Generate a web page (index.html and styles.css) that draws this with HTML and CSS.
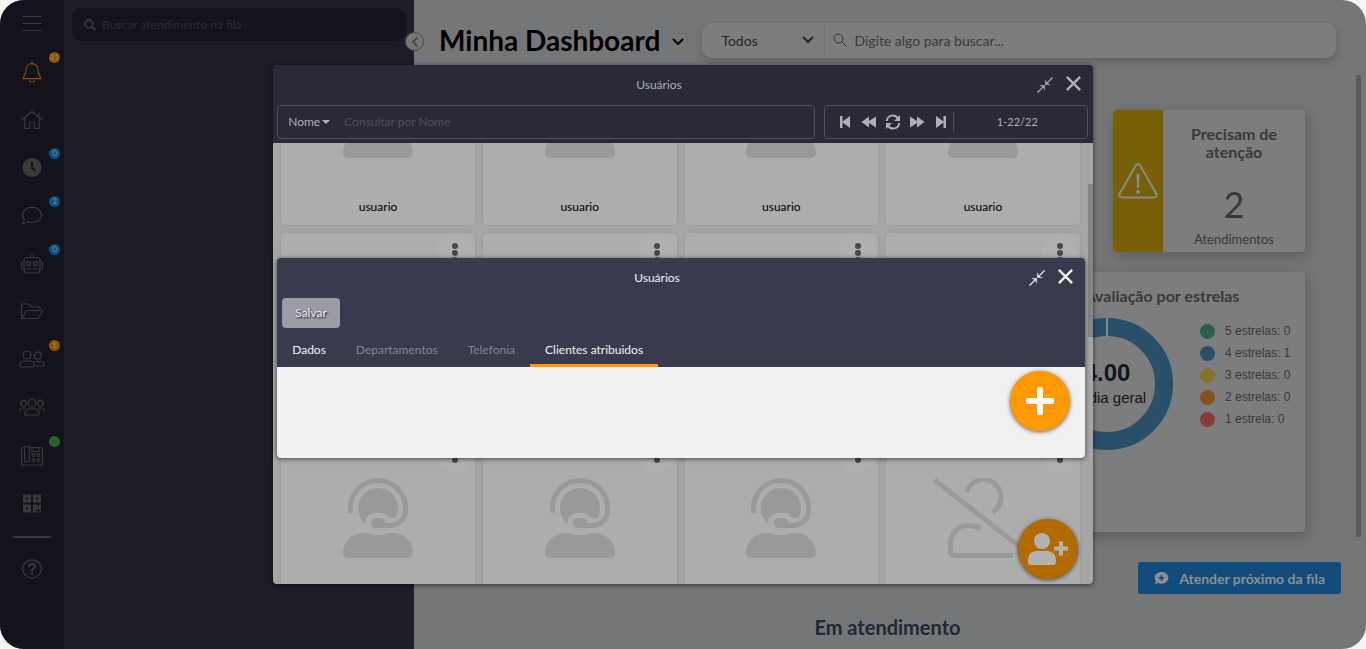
FILE: index.html
```html
<!DOCTYPE html>
<html lang="pt-BR">
<head>
<meta charset="utf-8">
<title>Minha Dashboard</title>
<meta name="viewport" content="width=device-width, initial-scale=1">
<link rel="stylesheet" href="styles.css">
</head>
<body>
<svg class="defs" aria-hidden="true">
  <symbol id="headset" viewBox="0 0 70 80">
    <circle cx="35" cy="30" r="20" fill="currentColor"/>
    <path class="cut" d="M32 35h6a9 9 0 0 1 8 5h12v15H32a10 10 0 0 1 0-20z"/>
    <path d="M7.500 32.500V30a27.500 27.500 0 0 1 55 0v2.500a15 15 0 0 1-15 15H36" fill="none" stroke="currentColor" stroke-width="5" stroke-linecap="round"/>
    <rect x="27.700" y="40" width="14.600" height="10" rx="5" fill="currentColor"/>
    <path d="M20 55h4q11 4.500 22 0h4a20 20 0 0 1 20 20a5 5 0 0 1-5 5H5a5 5 0 0 1-5-5a20 20 0 0 1 20-20z" fill="currentColor"/>
  </symbol>
  <symbol id="user-off" viewBox="0 0 100 80">
    <path d="M1.500 2l97 76M33.500 14.500A17.500 17.500 0 1 1 59.500 34M48 50.500C44 48.500 40 47.500 35 47.500C25 47.500 17.500 56 17.500 65v8.500q0 4 4 4H80" fill="none" stroke="currentColor" stroke-width="5"/>
  </symbol>
  <symbol id="search" viewBox="0 0 512 512"><path fill="currentColor" d="M505 442.700L405.300 343c-4.500-4.500-10.600-7-17-7H372c27.600-35.300 44-79.700 44-128C416 93.100 322.900 0 208 0S0 93.100 0 208s93.100 208 208 208c48.300 0 92.700-16.400 128-44v16.300c0 6.400 2.500 12.500 7 17l99.700 99.700c9.400 9.400 24.600 9.400 33.900 0l28.300-28.300c9.400-9.400 9.400-24.600.1-34zM208 336c-70.700 0-128-57.200-128-128 0-70.700 57.200-128 128-128 70.700 0 128 57.200 128 128 0 70.700-57.200 128-128 128z"/></symbol>
  <symbol id="shrink" viewBox="0 0 16 16"><path d="M.5 15.500L7.300 8.700M15.500.5L8.700 7.300" fill="none" stroke="currentColor" stroke-width="1.200"/><path d="M7.600 8.400v4.800L6.300 9.700 2.800 8.400zM8.400 7.600V2.800l1.300 3.500L13.200 7.600z" fill="currentColor" stroke="currentColor" stroke-width=".4"/></symbol>
  <symbol id="close" viewBox="0 0 14 14"><path d="M.8.8l12.400 12.400M13.200.8L.8 13.200" stroke="currentColor" stroke-width="2.200"/></symbol>
  <symbol id="kebab" viewBox="0 0 6 20"><g fill="currentColor"><circle cx="3" cy="3" r="3"/><circle cx="3" cy="10" r="3"/><circle cx="3" cy="17" r="3"/></g></symbol>
  <symbol id="chevron" viewBox="0 0 12 8"><path d="M1.500 1.500L6 6l4.500-4.500" fill="none" stroke="currentColor" stroke-width="2" stroke-linecap="round"/></symbol>
</svg>

<div class="app">
  <nav class="rail" aria-label="Principal">
    <button class="rail-item" aria-label="Menu"><svg viewBox="0 0 24 24"><path d="M3 4.500h18M3 11.500h18M3 18.500h18"/></svg></button>
    <button class="rail-item alert" aria-label="Notificações"><svg viewBox="0 0 24 24"><path d="M12 2v2M12 3.700c-3.800 0-6 2.800-6 6.300 0 4.500-1.300 5.500-2.500 7-.6.800-.2 1.700.7 1.700h15.600c.9 0 1.300-.9.700-1.700C19.300 15.500 18 14.500 18 10c0-3.500-2.200-6.300-6-6.300zM9.700 20.500a2.300 1.500 0 0 0 4.600 0"/></svg><span class="badge orange">31</span></button>
    <button class="rail-item" aria-label="Início"><svg viewBox="0 0 24 24"><path d="M2.500 11.500L12 3.500l9.500 8M4.800 9.800v10.700h4.700v-6h5v6h4.700V9.800M18.800 9V5"/></svg></button>
    <button class="rail-item" aria-label="Histórico"><svg viewBox="0 0 24 24"><circle class="solid" cx="12" cy="11.500" r="9.500"/><path class="clock-hand" d="M12 6.500V12l3 2.300"/></svg><span class="badge blue">0</span></button>
    <button class="rail-item" aria-label="Conversas"><svg viewBox="0 0 24 24"><path d="M12 3.300c5.300 0 9.500 3.400 9.500 7.600s-4.200 7.600-9.500 7.600c-1.600 0-3.200-.3-4.500-.9-1.500 1.200-3.400 2-5.200 2 1.200-1 2-2.500 2.100-3.900-1.200-1.300-1.900-3-1.900-4.800 0-4.200 4.200-7.600 9.500-7.600z"/></svg><span class="badge blue">2</span></button>
    <button class="rail-item" aria-label="Robôs"><svg viewBox="0 0 24 24"><rect x="4" y="5.500" width="16" height="15.500" rx="3"/><path d="M12 2v3.500M4 10H1.500v7H4M20 10h2.500v7H20M7 17h2M11 17h2M15 17h2"/><circle cx="8.400" cy="11.500" r="1.900"/><circle cx="15.600" cy="11.500" r="1.900"/></svg><span class="badge blue">0</span></button>
    <button class="rail-item" aria-label="Arquivos"><svg viewBox="0 0 24 24"><path d="M1.500 18.500V5q0-1 1-1h6l3 3h7.500q1 0 1 1v2.500M1.800 18.500l4-7q.5-1 1.500-1h14.500q1 0 .5 1l-3.500 6q-.5 1-1.500 1z"/></svg></button>
    <button class="rail-item" aria-label="Usuários"><svg viewBox="0 0 26 24"><circle cx="8" cy="7" r="4"/><circle cx="19" cy="7.700" r="3.500"/><path d="M1 19v-2q0-4 4-4h6q4 0 4 4v1q0 1-1 1zM17 13.500h4q4 0 4 4v.5h-8"/></svg><span class="badge orange">1</span></button>
    <button class="rail-item" aria-label="Grupos"><svg viewBox="0 0 26 24"><circle cx="13" cy="7" r="4"/><circle cx="4.500" cy="7" r="2.800"/><circle cx="21.500" cy="7" r="2.800"/><path d="M6 19v-2q0-4 4-4h6q4 0 4 4v1q0 1-1 1H7q-1 0-1-1zM1 15v-1q0-2 2-2h3M25 15v-1q0-2-2-2h-3"/></svg></button>
    <button class="rail-item" aria-label="Telefonia"><svg viewBox="0 0 24 24"><path d="M4.500 3.500H3q-1.500 0-1.500 1.500v14q0 2 2 2h17q2 0 2-2V5q0-1.500-1.500-1.500H9"/><rect x="4.500" y="2.500" width="5" height="15" rx="1"/><path d="M12 4v3.500h7V4"/><circle cx="13.500" cy="11" r="1.500"/><circle cx="18.500" cy="11" r="1.500"/><circle cx="13.500" cy="16" r="1.500"/><circle cx="18.500" cy="16" r="1.500"/></svg><span class="badge green"></span></button>
    <button class="rail-item" aria-label="QR Code"><svg viewBox="0 0 24 24"><path class="solid" fill-rule="evenodd" d="M3 2.500h8v8H3zM6 5.500v2h2v-2zM13 2.500h8v8h-8zM16 5.500v2h2v-2zM3 12.500h8v8H3zM6 15.500v2h2v-2zM13 12.500h4.500v2H19v-2h2v5h-4.500v-2H16v5h-3zM17 19h1.500v1.500H17zM19.500 19H21v1.500h-1.500z"/></svg></button>
    <hr class="rail-line">
    <button class="rail-item" aria-label="Ajuda"><svg viewBox="0 0 24 24"><circle cx="12" cy="12" r="9.200"/><path class="thick" d="M9 9.500c0-3.200 6-3.200 6 0 0 2-3 2-3 4M12 16v1"/></svg></button>
  </nav>

  <aside class="queue">
    <label class="queue-search"><svg><use href="#search"/></svg><input type="search" aria-label="Buscar atendimento na fila" placeholder="Buscar atendimento na fila"></label>
    <button class="collapse" aria-label="Recolher"><svg viewBox="0 0 8 12"><path d="M6.500 1.500L2 6l4.500 4.500"/></svg></button>
  </aside>

  <main class="main">
    <header class="topbar">
      <h1>Minha Dashboard</h1>
      <button class="title-toggle" aria-label="Trocar dashboard"><svg><use href="#chevron"/></svg></button>
      <div class="finder">
        <div class="filter"><select aria-label="Filtro"><option>Todos</option></select><svg><use href="#chevron"/></svg></div>
        <svg class="lens" viewBox="0 0 14 14"><circle cx="5.500" cy="5.500" r="4.500"/><path d="M9 9l4.300 4.300"/></svg>
        <input type="search" aria-label="Digite algo para buscar" placeholder="Digite algo para buscar...">
      </div>
    </header>

    <div class="widgets">
      <section class="attention">
        <div class="attention-mark"><svg viewBox="0 0 40 36"><path d="M17.800 2.500q2.200-3 4.400 0l16 28q1.500 4-2.500 4H4.300q-4 0-2.500-4z"/><path class="mark" d="M18.500 11h3l-.5 14h-2z"/><circle class="mark" cx="20" cy="29" r="2"/></svg></div>
        <div class="attention-body"><h2>Precisam de atenção</h2><strong>2</strong><span>Atendimentos</span></div>
      </section>
      <section class="rating">
        <h2>Avaliação por estrelas</h2>
        <div class="rating-row">
          <div class="donut">
            <svg viewBox="0 0 132 132"><circle cx="66" cy="66" r="57"/><path d="M66 0v19"/></svg>
            <p><b>4.00</b>Média geral</p>
          </div>
          <ul class="legend">
            <li class="s5">5 estrelas: 0</li>
            <li class="s4">4 estrelas: 1</li>
            <li class="s3">3 estrelas: 0</li>
            <li class="s2">2 estrelas: 0</li>
            <li class="s1">1 estrela: 0</li>
          </ul>
        </div>
      </section>
    </div>

    <div class="actions"><button class="next"><svg viewBox="0 0 16 14"><path d="M8 .5c4 0 7.300 2.700 7.300 6.200S12 13 8 13c-1.200 0-2.400-.2-3.400-.7-1.300.8-2.700 1.200-4.100 1.200.9-1 1.500-2.200 1.600-3.200C1.200 9.300.7 8 .7 6.700.7 3.200 4 .5 8 .5z"/><path class="plus" d="M8 4v5.600M5.200 6.800h5.600"/></svg>Atender próximo da fila</button></div>
    <h2 class="section-title">Em atendimento</h2>
    <div class="main-scroll"></div>
  </main>

  <div class="overlay">
    <section class="window" role="dialog" aria-label="Usuários">
      <header class="window-head"><h2>Usuários</h2>
        <div class="window-tools"><button aria-label="Minimizar"><svg class="i-shrink"><use href="#shrink"/></svg></button><button aria-label="Fechar"><svg class="i-close"><use href="#close"/></svg></button></div>
      </header>
      <div class="toolbar">
        <div class="query"><button class="field">Nome<i class="caret"></i></button><input type="search" aria-label="Consultar por Nome" placeholder="Consultar por Nome"></div>
        <div class="pager">
          <button aria-label="Primeira"><svg viewBox="0 0 16 16"><path d="M3 2h2.500v5.500L13 2v12L5.500 8.500V14H3z"/></svg></button>
          <button aria-label="Anterior"><svg viewBox="0 0 16 16"><path d="M.5 8L8 2.500V7l7-4.500v11L8 9v4.500z"/></svg></button>
          <button aria-label="Atualizar"><svg viewBox="0 0 16 16"><g fill="none" stroke="currentColor" stroke-width="2"><path d="M1.800 7A6 6 0 0 1 13 4.500M14.200 9A6 6 0 0 1 3 11.500"/></g><path d="M15 1v6H9zM1 15V9h6z"/></svg></button>
          <button aria-label="Próxima"><svg viewBox="0 0 16 16"><path d="M15.500 8L8 2.500V7L1 2.500v11L8 9v4.500z"/></svg></button>
          <button aria-label="Última"><svg viewBox="0 0 16 16"><path d="M13 2h-2.500v5.500L3 2v12l7.500-5.500V14H13z"/></svg></button>
          <span class="range">1-22/22</span>
        </div>
      </div>
      <div class="window-body">
        <div class="users">
          <article class="user"><button class="more" aria-label="Opções"><svg><use href="#kebab"/></svg></button><svg class="face"><use href="#headset"/></svg><p>usuario</p></article>
          <article class="user"><button class="more" aria-label="Opções"><svg><use href="#kebab"/></svg></button><svg class="face"><use href="#headset"/></svg><p>usuario</p></article>
          <article class="user"><button class="more" aria-label="Opções"><svg><use href="#kebab"/></svg></button><svg class="face"><use href="#headset"/></svg><p>usuario</p></article>
          <article class="user"><button class="more" aria-label="Opções"><svg><use href="#kebab"/></svg></button><svg class="face"><use href="#headset"/></svg><p>usuario</p></article>
          <article class="user"><button class="more" aria-label="Opções"><svg><use href="#kebab"/></svg></button></article>
          <article class="user"><button class="more" aria-label="Opções"><svg><use href="#kebab"/></svg></button></article>
          <article class="user"><button class="more" aria-label="Opções"><svg><use href="#kebab"/></svg></button></article>
          <article class="user"><button class="more" aria-label="Opções"><svg><use href="#kebab"/></svg></button></article>
          <article class="user"><button class="more" aria-label="Opções"><svg><use href="#kebab"/></svg></button><svg class="face"><use href="#headset"/></svg></article>
          <article class="user"><button class="more" aria-label="Opções"><svg><use href="#kebab"/></svg></button><svg class="face"><use href="#headset"/></svg></article>
          <article class="user"><button class="more" aria-label="Opções"><svg><use href="#kebab"/></svg></button><svg class="face"><use href="#headset"/></svg></article>
          <article class="user"><button class="more" aria-label="Opções"><svg><use href="#kebab"/></svg></button><svg class="face"><use href="#user-off"/></svg></article>
        </div>
        <div class="body-scroll"></div>
        <button class="fab fab-user" aria-label="Novo usuário"><svg viewBox="0 0 40 32"><circle cx="14" cy="8" r="8"/><path d="M8 18h12q8 1 8 9v2q0 3-3 3H3q-3 0-3-3v-2q0-8 8-9z"/><path d="M31 8.500h4v5h5v4h-5v5h-4v-5h-5v-4h5z"/></svg></button>
      </div>

      <section class="window sub" role="dialog" aria-label="Usuários – clientes atribuidos">
        <header class="window-head"><h2>Usuários</h2>
          <div class="window-tools"><button aria-label="Minimizar"><svg class="i-shrink"><use href="#shrink"/></svg></button><button aria-label="Fechar"><svg class="i-close"><use href="#close"/></svg></button></div>
        </header>
        <button class="save">Salvar</button>
        <div class="tabs" role="tablist">
          <button class="tab lit" role="tab">Dados</button>
          <button class="tab" role="tab">Departamentos</button>
          <button class="tab" role="tab">Telefonia</button>
          <button class="tab lit active" role="tab" aria-selected="true">Clientes atribuidos</button>
        </div>
        <div class="sub-body"><button class="fab" aria-label="Adicionar"><svg class="i-plus" viewBox="0 0 28 28"><rect x="11" width="6" height="28" rx="2"/><rect y="11" width="28" height="6" rx="2"/></svg></button></div>
      </section>
    </section>
  </div>
</div>
</body>
</html>
```

FILE: styles.css
```css
* { box-sizing: border-box; }
body { margin: 0; background: #f5f5f5; font-family: Lato, "Liberation Sans", sans-serif; font-size: 12px; }
h1, h2, p, ul { margin: 0; padding: 0; }
button, input, select { font: inherit; color: inherit; background: none; border: 0; padding: 0; margin: 0; outline: 0; }
input { min-width: 0; flex: 1; appearance: none; }
.defs { position: absolute; width: 0; height: 0; }
.app { position: relative; display: flex; height: 100vh; border-radius: 24px; overflow: hidden; background: #757678; }

/* icon rail */
.rail { width: 64px; flex: none; background: #12131b; display: flex; flex-direction: column; }
.rail-item { position: relative; height: 48px; display: flex; align-items: center; justify-content: center; color: #3a3a3b; }
.rail-item svg { height: 24px; width: 26px; fill: none; stroke: currentColor; stroke-width: 1.2; stroke-linecap: round; stroke-linejoin: round; }
.rail-item .solid { fill: currentColor; stroke: none; }
.rail-item .thick { stroke-width: 2; }
.rail-item .clock-hand { stroke: #12131b; stroke-width: 2; }
.alert { color: #874f00; }
.badge { position: absolute; top: 4px; right: 4px; width: 11px; height: 11px; border-radius: 50%; font-size: 8px; line-height: 11px; text-align: center; color: #8a8a8a; }
.orange { background: #925300; }
.blue { background: #124f83; }
.green { background: #2a622c; }
.rail-line { width: 38px; height: 2px; margin: 8px auto 7px; border: 0; background: #3a3a3b; border-radius: 1px; }

/* queue column */
.queue { position: relative; width: 350px; flex: none; padding: 8px; background: #1d1d27; }
.queue-search { display: flex; align-items: center; gap: 6px; height: 33px; padding: 0 12px; border-radius: 10px; background: #13131b; color: #343439; }
.queue-search svg { width: 12px; height: 12px; }
.queue-search input::placeholder { color: #2d2d30; opacity: 1; }
.collapse { position: absolute; right: -10px; top: 32px; width: 19px; height: 19px; border: 1px solid #48494b; border-radius: 50%; background: #757678; display: flex; align-items: center; justify-content: center; z-index: 1; }
.collapse svg { width: 8px; height: 12px; fill: none; stroke: #48494b; stroke-width: 2; }

/* dashboard */
.main { position: relative; flex: 1; min-width: 0; }
.topbar { display: flex; align-items: center; padding: 22px 30px 0 25px; }
.topbar h1 { font-size: 28px; line-height: 36px; color: #000; white-space: nowrap; }
.title-toggle { width: 12px; margin: 4px 18px 0 12px; color: #000; display: flex; }
.title-toggle svg, .filter svg { width: 12px; height: 8px; }
.finder { flex: 1; display: flex; align-items: center; height: 35px; border-radius: 10px; background: #7d7d7d; box-shadow: 0 4px 10px rgba(0,0,0,.18); font-size: 14px; color: #25252b; }
.filter { position: relative; width: 123px; height: 35px; border-right: 1px solid #757575; display: flex; align-items: center; }
.filter select { appearance: none; width: 100%; height: 35px; padding-left: 19px; color: #25252b; }
.filter svg { position: absolute; right: 10px; pointer-events: none; }
.lens { width: 14px; height: 14px; margin: 0 7px 0 8px; fill: none; stroke: #2d2d30; stroke-width: 1; }
.finder input::placeholder { color: #3a3a3b; opacity: 1; }
.widgets { display: flex; flex-direction: column; align-items: flex-end; gap: 20px; padding: 52px 61px 0 0; }
.attention { display: flex; width: 192px; height: 142px; border-radius: 4px; overflow: hidden; background: #7d7d7d; color: #38393b; }
.attention, .rating { box-shadow: 2px 4px 14px rgba(0,0,0,.22); }
.attention-mark { width: 50px; background: #776008; display: flex; align-items: center; justify-content: center; }
.attention-mark svg { width: 40px; height: 36px; fill: none; stroke: #8a8a8a; stroke-width: 2; }
.attention-mark .mark { fill: #8a8a8a; stroke: none; }
.attention-body { flex: 1; display: flex; flex-direction: column; align-items: center; text-align: center; padding-top: 15px; font-size: 13px; }
.attention h2, .rating h2 { font-size: 16px; line-height: 18px; color: #38393b; }
.attention h2 { padding: 0 20px; }
.attention strong { font-size: 36px; line-height: 44px; font-weight: 400; margin-top: 21px; }
.attention span { line-height: 18px; margin-top: 4px; }
.rating { width: 286px; height: 260px; border-radius: 4px; background: #7d7d7d; padding-top: 15px; text-align: center; }
.rating-row { display: flex; gap: 27px; padding: 13px 0 0 22px; font-family: "Liberation Sans", Arial, sans-serif; }
.donut { position: relative; width: 132px; height: 132px; flex: none; }
.donut svg { width: 132px; height: 132px; fill: none; stroke: #2a5069; stroke-width: 18; }
.donut path { stroke: #8a8a8a; stroke-width: 2; }
.donut p { position: absolute; inset: 0; display: flex; flex-direction: column; align-items: center; justify-content: center; font-size: 15px; line-height: 22px; color: #14141f; }
.donut b { font-size: 24px; line-height: 28px; }
.legend { list-style: none; font-size: 12px; line-height: 22px; color: #38393b; text-align: left; padding-top: 2px; white-space: nowrap; }
.legend li { display: flex; align-items: center; gap: 10px; }
.legend li::before { content: ""; width: 15px; height: 15px; border-radius: 50%; background: currentColor; }
.s5::before { color: #28604f; }
.s4::before { color: #2a5069; }
.s3::before { color: #85732a; }
.s2::before { color: #85531f; }
.s1::before { color: #873c39; }
.actions { display: flex; justify-content: flex-end; padding: 30px 25px 0 0; }
.next { display: flex; align-items: center; gap: 10px; height: 32px; padding: 0 16px; border-radius: 3px; background: #124c7d; color: #8c8f93; font-size: 14px; font-weight: 700; }
.next svg { width: 15px; height: 14px; fill: currentColor; }
.next .plus { stroke: #124c7d; stroke-width: 2; }
.section-title { margin-top: 21px; padding-right: 5px; text-align: center; font-size: 20px; line-height: 24px; color: #212733; }
.main-scroll { position: absolute; right: 5px; top: 75px; width: 5px; height: 462px; background: #5a5a5c; }

/* windows */
.overlay { position: absolute; inset: 0; display: flex; align-items: center; justify-content: center; z-index: 2; }
.window { position: relative; display: flex; flex-direction: column; width: 60%; height: 80%; border-radius: 4px; background: #2a2936; color: #b0b0b3; box-shadow: 0 1px 5px rgba(0,0,0,.6); }
.window-head { position: relative; flex: none; height: 40px; display: flex; align-items: center; justify-content: center; padding-right: 48px; }
.window-head h2 { font-size: 12px; font-weight: 400; }
.window-tools { position: absolute; right: 12px; top: 0; height: 38px; display: flex; align-items: center; gap: 13px; }
.window-tools button { display: flex; }
.i-shrink { width: 16px; height: 16px; margin-top: 2px; }
.i-close { width: 15px; height: 15px; }
.toolbar { display: flex; gap: 9px; padding: 0 5px 4px 4px; }
.query, .pager { display: flex; align-items: center; height: 34px; border: 1px solid #504f55; border-radius: 4px; }
.query { flex: 1; padding: 0 10px; gap: 14px; }
.query input::placeholder { color: #504f55; opacity: 1; }
.field { display: flex; align-items: center; gap: 2px; }
.caret { border: 4px solid transparent; border-top-color: currentColor; border-bottom: 0; }
.pager { width: 264px; padding-left: 8px; }
.pager button { width: 24px; display: flex; justify-content: center; }
.pager svg { width: 16px; height: 16px; fill: currentColor; }
.range { flex: 1; height: 20px; line-height: 20px; border-left: 1px solid #504f55; padding-right: 6px; text-align: center; font-size: 11px; }
.window-body { position: relative; flex: 1; min-height: 0; overflow: hidden; border-radius: 0 0 4px 4px; background: #a6a6a6; color: #000; }
.users { display: grid; grid-template-columns: repeat(4, 1fr); grid-auto-rows: 192px; gap: 8px; padding: 0 13px 0 8px; margin-top: -110px; }
.user { position: relative; display: flex; flex-direction: column; align-items: center; padding-top: 45px; border-radius: 4px; background: #adadad; box-shadow: 0 0 4px rgba(0,0,0,.08); }
.user p { margin-top: 41px; line-height: 16px; }
.face { width: 100px; height: 80px; color: #999; }
.cut { fill: #adadad; }
.more { position: absolute; top: 2px; right: 2px; width: 36px; height: 36px; border-radius: 14px; background: #b0b0b0; color: #484848; display: flex; justify-content: center; padding-top: 8px; }
.more svg { width: 6px; height: 20px; }
.body-scroll { position: absolute; right: 0; top: 41px; width: 5px; height: 153px; background: #858585; }
.fab { position: absolute; right: 15px; width: 60px; height: 60px; border-radius: 50%; background: #ff9900; color: #fff; display: flex; align-items: center; justify-content: center; box-shadow: 0 1px 4px rgba(0,0,0,.6); }
.fab svg { width: 40px; height: 32px; fill: currentColor; }
.fab .i-plus { width: 28px; height: 28px; }
.fab-user { bottom: 5px; background: #b36b00; color: #b2b2b2; }
.sub { position: absolute; top: 193px; left: 4px; right: 8px; width: auto; height: 200px; background: #3a3a4d; color: #f3f3f5; }
.save { align-self: flex-start; height: 30px; margin-left: 5px; padding: 0 13px; border-radius: 4px; background: #9c9ca6; text-shadow: 1px 1px 2px #000; }
.tabs { display: flex; height: 39px; padding-top: 5px; }
.tab { padding: 0 15px; border-bottom: 3px solid transparent; border-top: 3px solid transparent; color: #85858f; }
.lit { color: #f3f3f5; }
.active { border-bottom-color: #ff9900; }
.sub-body { position: relative; flex: 1; background: #f1f1f1; border-radius: 0 0 4px 4px; }
.sub-body .fab { top: 4px; }
```
